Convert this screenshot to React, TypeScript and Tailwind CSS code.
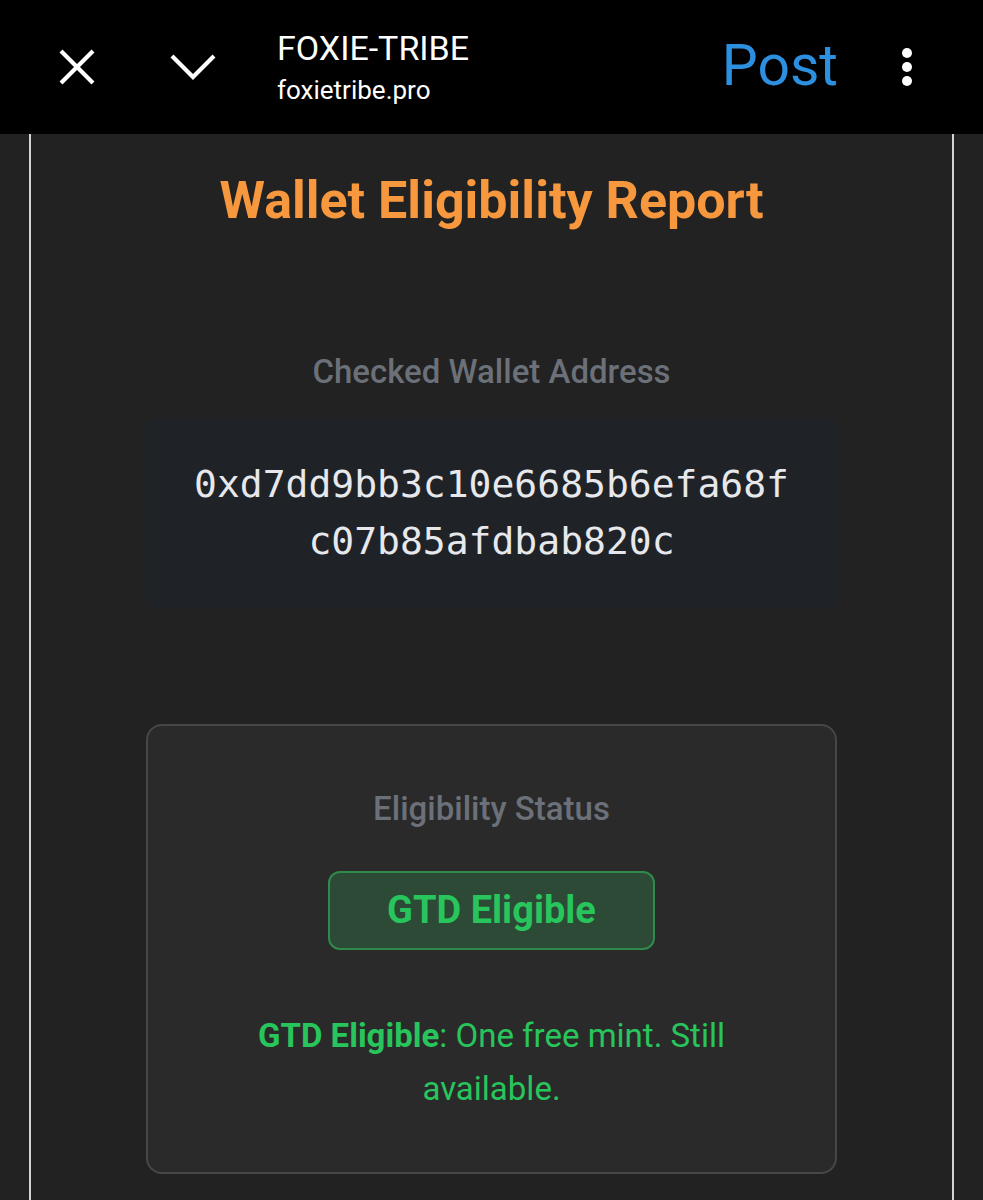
const ADDRESS = "0xd7dd9bb3c10e6685b6efa68fc07b85afdbab820c";

function TopBar() {
  return (
    <header className="h-[134px] bg-black flex items-center text-white">
      <button className="ml-[59px] flex">
        <svg width="36" height="36" viewBox="0 0 36 36" fill="none" stroke="currentColor" strokeWidth="4.2">
          <path d="M2 2 34 34M34 2 2 34" />
        </svg>
      </button>
      <button className="ml-[75px] flex">
        <svg width="46" height="28" viewBox="0 0 46 28" fill="none" stroke="currentColor" strokeWidth="4.2">
          <path d="M2 3 23 24 44 3" />
        </svg>
      </button>
      <div className="ml-[61px] flex flex-col">
        <span className="text-[34px] leading-[40px]">FOXIE-TRIBE</span>
        <span className="text-[26px] leading-[34px] mt-[5px]">foxietribe.pro</span>
      </div>
      <span className="ml-auto text-[57px] leading-none text-[#2c8fe0] -mt-[4px]">Post</span>
      <div className="ml-[64px] mr-[71px] flex flex-col gap-[4px]">
        <span className="w-[10px] h-[10px] rounded-full bg-white" />
        <span className="w-[10px] h-[10px] rounded-full bg-white" />
        <span className="w-[10px] h-[10px] rounded-full bg-white" />
      </div>
    </header>
  );
}

export default function App() {
  return (
    <div className="min-h-[1200px] bg-[#222222] font-['Roboto',sans-serif]">
      <TopBar />
      <main className="mx-[29px] border-x-2 border-[#d4d4d4] min-h-[1066px]">
        <div className="w-[691px] mx-auto flex flex-col items-center pt-[36px]">
          <h1 className="text-[52px] leading-[62px] font-bold text-[#f7983f]">Wallet Eligibility Report</h1>

          <p className="mt-[120px] text-[33px] leading-[40px] font-medium text-[#6b7079]">Checked Wallet Address</p>
          <div className="mt-[26px] w-full h-[190px] rounded-lg bg-[#1f2227] px-[44px] flex items-center justify-center">
            <p className="font-['DejaVu_Sans_Mono',monospace] text-[38px] leading-[57px] text-[#e6e8ec] text-center break-all">
              {ADDRESS}
            </p>
          </div>

          <section className="mt-[116px] w-full h-[450px] rounded-2xl border-2 border-[#474747] bg-[#2a2a2a] flex flex-col items-center pt-[63px]">
            <p className="text-[33px] leading-[40px] font-medium text-[#6b7079]">Eligibility Status</p>
            <div className="mt-[42px] w-[327px] h-[79px] rounded-[12px] border-2 border-[#2f8a4c] bg-[#2c4a36] flex items-center justify-center">
              <span className="text-[38px] font-bold text-[#28c55c]">GTD Eligible</span>
            </div>
            <p className="mt-[59px] max-w-[540px] text-center text-[33px] leading-[53px] text-[#28c55c]">
              <span className="font-bold">GTD Eligible</span>: One free mint. Still available.
            </p>
          </section>
        </div>
      </main>
    </div>
  );
}
